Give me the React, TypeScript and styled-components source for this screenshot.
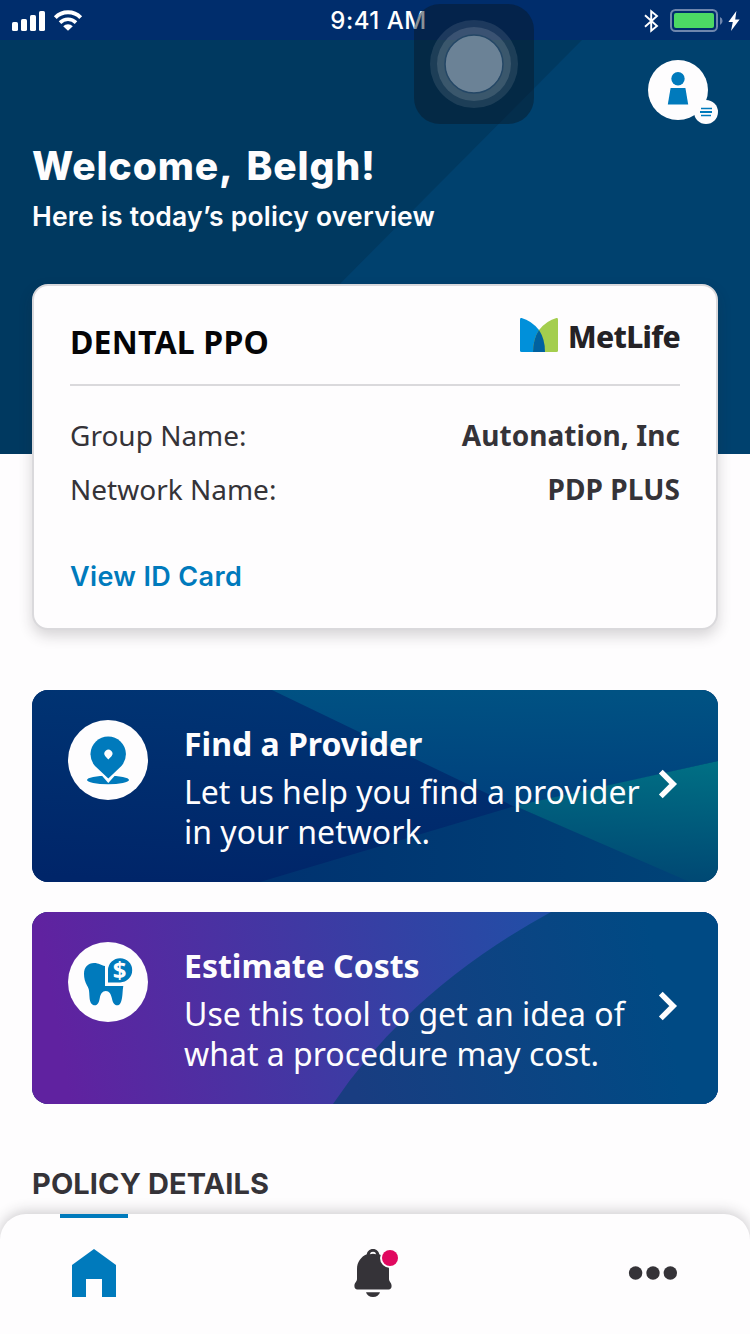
import React from "react";
import styled, { createGlobalStyle } from "styled-components";

const GlobalStyle = createGlobalStyle`
  * { box-sizing: border-box; }
  body { margin: 0; background: #fefdfe; }
`;

const body = `"Noto Sans", sans-serif`;
const display = `Inter, "Noto Sans", sans-serif`;

const Screen = styled.main`
  position: relative;
  display: flex;
  flex-direction: column;
  width: 750px;
  height: 1334px;
  overflow: hidden;
  background: #fefdfe;
  color: #353338;
  font-family: ${body};
`;

const StatusBar = styled.div`
  display: grid;
  grid-template-columns: 1fr auto 1fr;
  align-items: center;
  flex: none;
  height: 40px;
  padding: 0 10px 0 12px;
  background: #002d6c;
  color: #fff;
`;

const StatusGroup = styled.div<{ $end?: boolean }>`
  display: flex;
  align-items: center;
  justify-content: ${(p) => (p.$end ? "flex-end" : "flex-start")};
  gap: 8px;
`;

const Clock = styled.time`
  font: 500 24px/40px ${display};
  letter-spacing: 0.5px;
  padding: 1px 0 0 5px;
`;

const Content = styled.div`
  flex: 1;
  min-height: 0;
  display: flex;
  flex-direction: column;
`;

const Hero = styled.header`
  position: relative;
  flex: none;
  height: 414px;
  background: #003960;
  color: #fefdfe;
`;

const Backdrop = styled.svg`
  position: absolute;
  inset: 0;
  width: 100%;
  height: 100%;
`;

const HeroTop = styled.div`
  position: relative;
  display: flex;
  justify-content: flex-end;
  height: 100px;
  padding: 20px 31px 0 0;
`;

const Greeting = styled.h1`
  position: relative;
  margin: 0;
  padding-left: 32px;
  font: 800 39px/52px ${display};
  letter-spacing: 0.9px;
  word-spacing: 5px;
`;

const Subtitle = styled.p`
  position: relative;
  margin: 6px 0 0;
  padding-left: 32px;
  font: 600 26.5px/36px ${display};
  letter-spacing: 0.22px;
`;

const PolicyCard = styled.section`
  position: relative;
  flex: none;
  height: 346px;
  margin: -170px 32px 0;
  padding: 0 36px;
  border: 2px solid #dad9dc;
  border-radius: 16px;
  background: #fefdfe;
  box-shadow: 0 6px 14px rgba(40, 36, 44, 0.19);
`;

const CardHeader = styled.div`
  display: flex;
  justify-content: space-between;
  height: 100px;
  border-bottom: 2px solid #dad9dc;
`;

const PlanName = styled.h2`
  margin: 0;
  color: #050507;
  font: 700 32px/44px ${body};
  letter-spacing: 0.2px;
  padding-top: 34px;
`;

const Brand = styled.div`
  display: flex;
  height: 36px;
  margin-top: 32px;
  gap: 10px;
  color: #242226;
  font: 800 30px/37px ${body};
  letter-spacing: -0.7px;
`;

const Details = styled.dl`
  margin: 22px 0 0;
`;

const DetailRow = styled.div`
  display: flex;
  justify-content: space-between;
  height: 54px;
  font-size: 28px;
  line-height: 54px;

  dd { margin: 0; font-weight: 700; letter-spacing: 0.07px; }
`;

const CardLink = styled.a`
  display: block;
  margin-top: 43px;
  color: #007abc;
  font: 600 27px/36px ${display};
  letter-spacing: 0.35px;
`;

const Actions = styled.nav`
  display: flex;
  flex: none;
  flex-direction: column;
  gap: 30px;
  padding: 60px 32px 0;
`;

const ActionCard = styled.a`
  position: relative;
  display: flex;
  height: 192px;
  padding: 30px 36px;
  overflow: hidden;
  border-radius: 16px;
  background: #002b6d;
  color: #fefdfe;
`;

const ActionIcon = styled.span`
  position: relative;
  flex: none;
  width: 80px;
  height: 80px;
  margin-right: 36px;
  border-radius: 50%;
  background: #fefdfe;

  svg { display: block; }
`;

const ActionText = styled.span`
  position: relative;
  flex: 1;
  white-space: nowrap;
  font-size: 32px;
  line-height: 40px;

  strong { display: block; margin-bottom: 4px; line-height: 48px; }
`;

const Chevron = styled.svg`
  position: relative;
  flex: none;
  align-self: center;
  margin-right: 4px;
  margin-top: -4px;
`;

const SectionTitle = styled.h2`
  flex: none;
  margin: 60px 0 0;
  padding-left: 32px;
  font: 650 29px/40px ${display};
  letter-spacing: 0.1px;
`;

const TabBar = styled.nav`
  position: relative;
  display: flex;
  justify-content: space-between;
  flex: none;
  height: 120px;
  padding: 0 63px 0 60px;
  border-radius: 26px 26px 0 0;
  background: #fefdfe;
  box-shadow: 0 -2px 14px rgba(40, 36, 44, 0.24);
`;

const Tab = styled.a<{ $active?: boolean }>`
  display: flex;
  justify-content: center;
  width: 68px;
  padding-top: 30px;
  border-top: 4px solid ${(p) => (p.$active ? "#007abc" : "transparent")};
`;

const AssistiveTouch = styled.div`
  position: absolute;
  top: 4px;
  left: 414px;
  width: 120px;
  height: 120px;
  border-radius: 26px;
  background: rgba(8, 26, 40, 0.48);
`;

const blue = "#007abc";

const Signal = () => (
  <svg width="33" height="20" viewBox="0 0 33 20" fill="#fff">
    <rect x="0" y="11" width="6" height="9" rx="1.6" />
    <rect x="9" y="8" width="6" height="12" rx="1.6" />
    <rect x="18" y="4" width="6" height="16" rx="1.6" />
    <rect x="27" y="0" width="6" height="20" rx="1.6" />
  </svg>
);

const Wifi = () => (
  <svg width="30" height="21" viewBox="0 0 30 21" fill="none" stroke="#fff" strokeWidth="4">
    <path d="M2.3 7.6a18 18 0 0 1 25.4 0" />
    <path d="M7 12.6a11.4 11.4 0 0 1 16 0" strokeWidth="3.6" />
    <path d="M10.2 16.2a6.8 6.8 0 0 1 9.6 0L15 20.8z" fill="#fff" stroke="none" />
  </svg>
);

const Bluetooth = () => (
  <svg width="16" height="24" viewBox="0 0 16 24" fill="none" stroke="#fff" strokeWidth="1.9">
    <path d="M2 6.200 14 17l-5.800 4.800V2.200L14 7 2 17.800" />
  </svg>
);

const Battery = () => (
  <svg width="53" height="23" viewBox="0 0 53 23">
    <rect x="1" y="1" width="46" height="21" rx="4.5" fill="none" stroke="#6e86ad" strokeWidth="2" />
    <rect x="4" y="4" width="40" height="15" rx="2" fill="#4cd964" />
    <path d="M50 8a4.4 4.4 0 0 1 0 8z" fill="#6e86ad" />
  </svg>
);

const BatteryGroup = styled.span`
  display: flex;
  align-items: center;
  gap: 5px;
  padding-left: 3px;
`;

const Bolt = () => (
  <svg width="12" height="20" viewBox="0 0 12 20" fill="#fff">
    <path d="M8.4 0 .4 11h4.400L3 20l8.600-11.600H7.200z" />
  </svg>
);

const Profile = () => (
  <svg width="71" height="65" viewBox="0 0 71 65">
    <circle cx="30" cy="30" r="30" fill="#fefdfe" />
    <circle cx="30" cy="18.800" r="6.700" fill={blue} />
    <path d="M22.600 28h14.800l2.800 16.600H19.800z" fill={blue} />
    <circle cx="58" cy="52" r="12" fill="#fefdfe" />
    <path d="M53 48.500h11M53 55.500h10" stroke={blue} strokeWidth="1.300" />
    <path d="M52 52h12" stroke={blue} strokeWidth="2" />
  </svg>
);

const MetLifeMark = () => (
  <svg width="38" height="34" viewBox="0 0 38 34">
    <path d="M0 1.500Q0-.2 1.600.1 11 2.500 19 12q6 9 6 22H1.500Q0 34 0 32.500z" fill="#0090da" />
    <path d="M38 1.500Q38-.2 36.400.1 27 2.500 19 12q-6 9-6 22h23.500q1.500 0 1.500-1.500z" fill="#a4ce4e" />
    <path d="M19 12q6 9 6 22H13q0-13 6-22z" fill="#0061a0" />
  </svg>
);

const PinIcon = () => (
  <svg width="80" height="80" viewBox="0 0 80 80">
    <ellipse cx="40" cy="60" rx="21" ry="4.200" fill={blue} />
    <path d="M28 47 40.300 61.200 53 47z" fill="#fefdfe" stroke="#fefdfe" strokeWidth="2.400" />
    <path d="M40.300 58.500 27 46a17.700 17.700 0 1 1 26.400 0z" fill={blue} />
    <path d="m40.300 39.500-3-3.300a4 4 0 1 1 6.200 0z" fill="#fefdfe" />
  </svg>
);

const Dollar = styled.text`
  font: 700 24px ${body};
`;

const ToothIcon = () => (
  <svg width="80" height="80" viewBox="0 0 80 80">
    <path
      d="M16 32C16 25 20 21 26 21c5 0 7 2.600 11 3v20h18.300c-.8 4-.5 8-1.300 12-.8 4.500-2 7.300-4.700 7.300-3.300 0-4.600-3-5.500-7.300-.9-4-2.500-7-6-7s-5.300 3-6 7c-.8 4.300-2 7.300-4.800 7.300-3.500 0-5.200-3-5.500-8.300-.3-6-.3-8-2.500-11.500C17 40 16 36 16 32z"
      fill={blue}
    />
    <path d="M40 40.400V28a12.100 12.100 0 1 1 12.200 12.400z" fill={blue} />
    <Dollar x="51.700" y="37" textAnchor="middle" fill="#fefdfe">$</Dollar>
  </svg>
);

const FindBackdrop = () => (
  <Backdrop viewBox="0 0 686 192" preserveAspectRatio="none">
    <defs>
      <linearGradient id="find-left" x1="0.400" y1="0" x2="0.250" y2="1">
        <stop stopColor="#003473" />
        <stop offset="1" stopColor="#002569" />
      </linearGradient>
      <linearGradient id="find-top" x1="0.500" y1="0" x2="0.400" y2="1">
        <stop stopColor="#005283" />
        <stop offset="1" stopColor="#00407d" />
      </linearGradient>
      <linearGradient id="find-bottom" x1="0" y1="0" x2="1" y2="0">
        <stop stopColor="#003270" />
        <stop offset="1" stopColor="#004377" />
      </linearGradient>
      <linearGradient id="find-right" x1="0.700" y1="0" x2="0.600" y2="1">
        <stop stopColor="#006f84" />
        <stop offset="1" stopColor="#004773" />
      </linearGradient>
    </defs>
    <path d="M0 0h245L483 116 233 192H0z" fill="url(#find-left)" />
    <path d="M240 0h446v71L483 117z" fill="url(#find-top)" />
    <path d="M228 192 483 116 662 192z" fill="url(#find-bottom)" />
    <path d="M483 116 686 71v121h-28z" fill="url(#find-right)" />
  </Backdrop>
);

const EstimateBackdrop = () => (
  <Backdrop viewBox="0 0 686 192" preserveAspectRatio="none">
    <defs>
      <linearGradient id="cost-base" gradientUnits="userSpaceOnUse" x1="20" y1="90" x2="520" y2="0">
        <stop stopColor="#6022a0" />
        <stop offset="1" stopColor="#204fa6" />
      </linearGradient>
      <linearGradient id="cost-fold" gradientUnits="userSpaceOnUse" x1="320" y1="160" x2="670" y2="90">
        <stop stopColor="#193d81" />
        <stop offset="0.900" stopColor="#004a84" />
      </linearGradient>
    </defs>
    <path d="M0 0h686v192H0z" fill="url(#cost-base)" />
    <path d="M519 0Q378 77 301 192h385V0z" fill="url(#cost-fold)" />
  </Backdrop>
);

const ChevronRight = () => (
  <Chevron width="20" height="30" viewBox="0 0 20 30" fill="none" stroke="#fefdfe" strokeWidth="5.400">
    <path d="m2.800 2.600 12.400 12.400L2.800 27.400" />
  </Chevron>
);

const HomeIcon = () => (
  <svg width="44" height="50" viewBox="0 0 44 50" fill={blue}>
    <path d="M22 1 44 17v32H30V31H14v18H0V17z" />
  </svg>
);

const BellIcon = () => (
  <svg width="40" height="50" viewBox="0 0 40 50" fill="#353338" overflow="visible">
    <path d="M19 1c3.800 0 5.800 2.600 6.200 5.300C31 8.800 35 14 35 21v10c0 3 2.600 3.500 2.600 7 0 2.200-1.200 3.500-3 3.500H3.400C1.600 41.500.4 40.200.4 38c0-3.500 2.600-4 2.600-7V21c0-7 4-12.200 9.800-14.700C13.200 3.600 15.200 1 19 1z" />
    <path d="M15.800 6.200a3.300 3.300 0 0 1 6.400 0q-3.200-.8-6.400 0z" fill="#fefdfe" />
    <path d="M12 44.200h14q-1.500 4.800-7 4.800t-7-4.800z" />
    <circle cx="36" cy="10" r="10" fill="#fefdfe" />
    <circle cx="36" cy="10" r="8" fill="#e0085f" />
  </svg>
);

const MoreIcon = () => (
  <svg width="50" height="50" viewBox="0 0 50 50" fill="#353338">
    <circle cx="7.600" cy="25" r="6.700" />
    <circle cx="25" cy="25" r="6.700" />
    <circle cx="42.300" cy="25" r="6.700" />
  </svg>
);

export default function App() {
  return (
    <>
      <GlobalStyle />
      <Screen>
        <StatusBar>
          <StatusGroup><Signal /><Wifi /></StatusGroup>
          <Clock>9:41 AM</Clock>
          <StatusGroup $end>
            <Bluetooth />
            <BatteryGroup><Battery /><Bolt /></BatteryGroup>
          </StatusGroup>
        </StatusBar>
        <Content>
          <Hero>
            <Backdrop viewBox="0 0 750 414">
              <path d="M582 0H750v414H171z" fill="#00416e" />
            </Backdrop>
            <HeroTop><Profile /></HeroTop>
            <Greeting>Welcome, Belgh!</Greeting>
            <Subtitle>Here is today’s policy overview</Subtitle>
          </Hero>
          <PolicyCard>
            <CardHeader>
              <PlanName>DENTAL PPO</PlanName>
              <Brand><MetLifeMark />MetLife</Brand>
            </CardHeader>
            <Details>
              <DetailRow><dt>Group Name:</dt><dd>Autonation, Inc</dd></DetailRow>
              <DetailRow><dt>Network Name:</dt><dd>PDP PLUS</dd></DetailRow>
            </Details>
            <CardLink>View ID Card</CardLink>
          </PolicyCard>
          <Actions>
            <ActionCard>
              <FindBackdrop />
              <ActionIcon><PinIcon /></ActionIcon>
              <ActionText>
                <strong>Find a Provider</strong>
                Let us help you find a provider<br />in your network.
              </ActionText>
              <ChevronRight />
            </ActionCard>
            <ActionCard>
              <EstimateBackdrop />
              <ActionIcon><ToothIcon /></ActionIcon>
              <ActionText>
                <strong>Estimate Costs</strong>
                Use this tool to get an idea of<br />what a procedure may cost.
              </ActionText>
              <ChevronRight />
            </ActionCard>
          </Actions>
          <SectionTitle>POLICY DETAILS</SectionTitle>
        </Content>
        <TabBar>
          <Tab $active><HomeIcon /></Tab>
          <Tab><BellIcon /></Tab>
          <Tab><MoreIcon /></Tab>
        </TabBar>
        <AssistiveTouch>
          <svg width="120" height="120" viewBox="0 0 120 120">
            <circle cx="60" cy="60" r="44" fill="#fff" fillOpacity="0.100" />
            <circle cx="60" cy="60" r="37" fill="#fff" fillOpacity="0.130" />
            <circle cx="60" cy="60" r="29" fill="#6b8296" stroke="#244766" strokeWidth="1.500" />
          </svg>
        </AssistiveTouch>
      </Screen>
    </>
  );
}
